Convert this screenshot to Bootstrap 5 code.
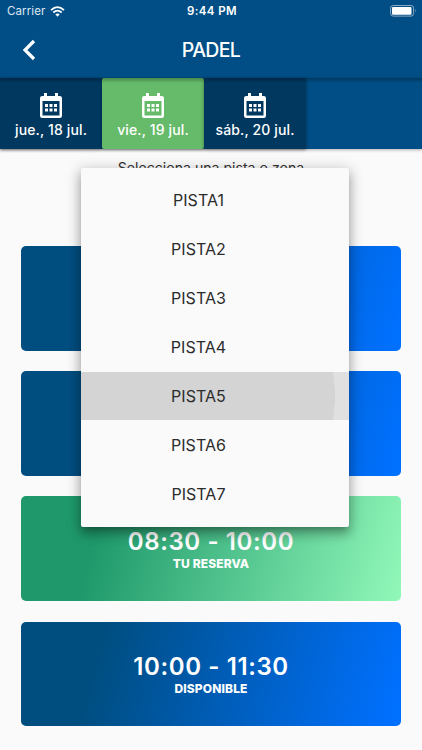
<!DOCTYPE html>
<html lang="es">
<head>
<meta charset="utf-8">
<meta name="viewport" content="width=device-width, initial-scale=1">
<title>Padel</title>
<link href="https://cdn.jsdelivr.net/npm/bootstrap@5.3.0/dist/css/bootstrap.min.css" rel="stylesheet">
<style>
body{font-family:Inter,sans-serif;background:#fafafa;width:422px;height:750px}
.top-area{background:#004e85;height:78px}
.status-line{height:22px;font-size:11.5px;line-height:22px;padding:0 5px 0 7px}
.carrier{color:#dbe8f3;letter-spacing:.1px}
.clock{font-weight:600;letter-spacing:.42px}
.side{width:130px}
.wifi{margin-left:5px}
.title-row{height:55px;padding-left:22px;padding-right:22px}
.page-title{font-size:19.5px;font-weight:500;letter-spacing:-.65px;line-height:24px}
.side-icon{width:14px}
.day-strip{background:#004e85;height:71px;position:relative;box-shadow:0 1px 3px rgba(0,0,0,.3)}
.day-strip::before{content:"";position:absolute;inset:0 0 auto;height:5px;background:linear-gradient(rgba(0,0,0,.28),transparent);z-index:3}
.day{width:102px;background:#003860;font-size:14px;font-weight:500;line-height:18px;letter-spacing:.13px;box-shadow:0 1px 3px rgba(0,0,0,.4);padding-top:15px}
.day.chosen{background:#66bb6a;border-radius:2px}
.day svg{margin-bottom:3px}
.hint{font-size:14.1px;line-height:20px;color:#333;height:97px;padding-top:8.5px}
.slots{padding:0 21px;gap:20.6px}
.slot{height:104.6px;border-radius:5px;background:linear-gradient(105deg,#004e80 21%,#0070ff 98%)}
.slot.mine{background:linear-gradient(105deg,#1f996b 21%,#90f7b8 99%)}
.hours{font-size:24px;font-weight:600;line-height:29px;letter-spacing:.6px}
.state{font-size:12px;font-weight:800;line-height:15px;letter-spacing:.12px}
.picker{position:absolute;left:80.700px;top:168px;width:268.600px;height:358.500px;background:#fafafa;border-radius:2px;padding:8px 0;box-shadow:0 5px 5px -3px rgba(0,0,0,.2),0 8px 10px 1px rgba(0,0,0,.14),0 3px 14px 2px rgba(0,0,0,.22);z-index:10}
.choice{height:48.900px;font-size:16px;letter-spacing:.05px;color:#2b2b2b;padding-right:33px}
.choice.pressed{background:radial-gradient(circle 160px at 94px 50%,#d4d4d4 99.7%,#e0e0e0 100%)}
</style>
<script src="https://cdn.jsdelivr.net/npm/bootstrap@5.3.0/dist/js/bootstrap.bundle.min.js"></script>
</head>
<body class="overflow-hidden position-relative">
<svg class="d-none"><symbol id="cal" viewBox="0 0 22 25"><path fill="#fff" fill-rule="evenodd" d="M4 0h3v3h8V0h3v3h1.800q2.200 0 2.200 2.200v17.600q0 2.200-2.200 2.200H2.200Q0 25 0 22.800V5.200Q0 3 2.200 3H4zM2.500 8v14.500h17V8zM5 11h3v3H5zm4.500 0h3v3h-3zm4.500 0h3v3h-3zM5 15.500h3v3H5zm4.500 0h3v3h-3zm4.500 0h3v3h-3z"/></symbol></svg>
<header class="top-area text-white">
<div class="status-line d-flex justify-content-between align-items-center">
<div class="side d-flex align-items-center"><span class="carrier">Carrier</span>
<svg class="wifi" width="15" height="11" viewBox="0 0 13 10" fill="none" stroke="#fff" stroke-width="1.600"><path d="M.6 3.700Q6.500-1.700 12.400 3.700M2.700 5.900Q6.500 2.500 10.300 5.900"/><path d="M4.500 7.600Q6.500 6 8.500 7.600L6.500 9.700z" fill="#fff" stroke="none"/></svg></div>
<span class="clock">9:44 PM</span>
<div class="side d-flex justify-content-end"><svg width="27" height="12" viewBox="0 0 27 12"><rect x=".6" y=".5" width="23" height="10.600" rx="2.600" fill="none" stroke="#8aabc6"/><rect x="2" y="2" width="19.500" height="7.700" rx="1" fill="#fff"/><path d="M25 4q1.500 1.800 0 3.600z" fill="#8aabc6"/></svg></div>
</div>
<div class="title-row d-flex justify-content-between align-items-center">
<svg class="side-icon" width="14" height="22" viewBox="0 0 14 22" fill="none" stroke="#fff" stroke-width="3.200"><path d="M12 2 3 11l9 9"/></svg>
<h1 class="page-title m-0">PADEL</h1><span class="side-icon"></span>
</div>
</header>
<nav class="day-strip d-flex text-white">
<div class="day d-flex flex-column align-items-center"><svg width="22" height="25"><use href="#cal"/></svg><span>jue., 18 jul.</span></div>
<div class="day chosen d-flex flex-column align-items-center"><svg width="22" height="25"><use href="#cal"/></svg><span>vie., 19 jul.</span></div>
<div class="day d-flex flex-column align-items-center"><svg width="22" height="25"><use href="#cal"/></svg><span>sáb., 20 jul.</span></div>
</nav>
<main>
<p class="hint text-center m-0">Selecciona una pista o zona</p>
<div class="slots d-flex flex-column text-white text-center">
<div class="slot"></div>
<div class="slot"></div>
<div class="slot mine d-flex flex-column justify-content-center"><div class="hours">08:30 - 10:00</div><div class="state">TU RESERVA</div></div>
<div class="slot d-flex flex-column justify-content-center"><div class="hours">10:00 - 11:30</div><div class="state">DISPONIBLE</div></div>
</div>
</main>
<div class="picker">
<div class="choice d-flex align-items-center justify-content-center">PISTA1</div>
<div class="choice d-flex align-items-center justify-content-center">PISTA2</div>
<div class="choice d-flex align-items-center justify-content-center">PISTA3</div>
<div class="choice d-flex align-items-center justify-content-center">PISTA4</div>
<div class="choice pressed d-flex align-items-center justify-content-center">PISTA5</div>
<div class="choice d-flex align-items-center justify-content-center">PISTA6</div>
<div class="choice d-flex align-items-center justify-content-center">PISTA7</div>
</div>
</body>
</html>
